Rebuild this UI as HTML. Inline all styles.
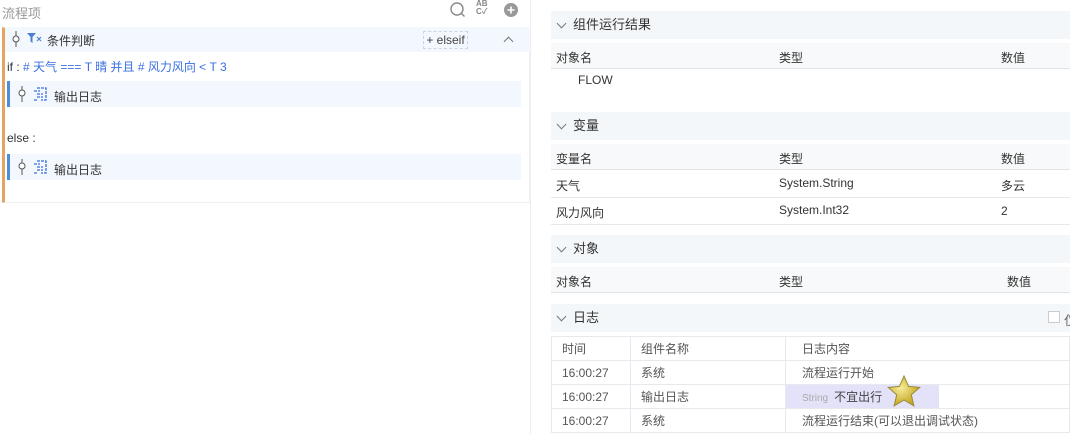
<!DOCTYPE html>
<html><head><meta charset="utf-8"><style>
*{margin:0;padding:0;box-sizing:border-box}
body{width:1070px;height:434px;background:#fff;position:relative;overflow:hidden;font-family:"Liberation Sans","Noto Sans CJK SC",sans-serif;font-size:12px;color:#333}
.a{position:absolute;white-space:nowrap}
.sec{position:absolute;left:551px;width:519px;height:28px;background:#f4f7fa;font-size:13px;line-height:28px;padding-left:22px;color:#333}
.sec:before{content:"";position:absolute;left:7px;top:9px;width:6px;height:6px;border-right:1px solid #777;border-bottom:1px solid #777;transform:rotate(45deg)}
.th{position:absolute;left:551px;width:519px;height:26px;background:#f8f9fa;border-bottom:1px solid #e0e3e6}
.row{position:absolute;left:551px;width:519px;height:27px;border-bottom:1px solid #e6e8ea}
.c{position:absolute;top:6px;white-space:nowrap}
.sub{position:absolute;left:7px;width:514px;height:26px;background:#f3f8fe;border-left:3px solid #4a90d9}
.lt{position:absolute;left:551px;top:336px;width:519px;border-collapse:collapse;font-size:12px}
.lt td{border:1px solid #e6e9ee;height:24px;padding-left:10px;color:#555}
.lt td.k{padding-left:16px}
</style></head><body>
<div class="a" style="left:2px;top:3px;font-size:13px;color:#999">流程项</div>
<svg class="a" style="left:449px;top:1px" width="18" height="18" viewBox="0 0 18 18"><circle cx="8" cy="8" r="6" fill="none" stroke="#888" stroke-width="1.4"/><path d="M12.5 12.5l3 3" stroke="#888" stroke-width="1.4"/></svg>
<div class="a" style="left:476px;top:0px;font-size:8px;line-height:8px;color:#888;font-weight:bold">AB<br>C✓</div>
<svg class="a" style="left:503px;top:2px" width="16" height="16"><circle cx="8" cy="8" r="7" fill="#999"/><path d="M8 4.5v7M4.5 8h7" stroke="#fff" stroke-width="1.6"/></svg>
<div class="a" style="left:2px;top:27px;width:528px;height:176px;border:1px solid #eef0f3;border-left:3px solid #e6a464"></div>
<div class="a" style="left:5px;top:27px;width:525px;height:25px;background:#f3f8fe"></div>
<svg class="a" style="left:11px;top:31px" width="10" height="16"><line x1="5" y1="0" x2="5" y2="16" stroke="#555"/><circle cx="5" cy="8" r="3" fill="#fff" stroke="#555"/></svg>
<svg class="a" style="left:26px;top:32px" width="16" height="13"><path d="M1 1h9l-3.5 4v6l-2-1.5v-4.5z" fill="#4a7fd6"/><path d="M11 5l4 4M15 5l-4 4" stroke="#4a7fd6" stroke-width="1.2"/></svg>
<div class="a" style="left:47px;top:32px;font-size:12px;color:#333">条件判断</div>
<div class="a" style="left:423px;top:31px;width:45px;height:18px;border:1px dashed #cdd5e0;font-size:12px;line-height:16px;text-align:center;color:#444">+ elseif</div>
<div class="a" style="left:505px;top:38px;width:7px;height:7px;border-left:1px solid #777;border-top:1px solid #777;transform:rotate(45deg)"></div>
<div class="a" style="left:7px;top:58px;font-size:12px;color:#333">if : <span style="color:#3a6fe0"># 天气 === T 晴 并且 # 风力风向 &lt; T 3</span></div>
<div class="sub" style="top:81px"></div>
<div class="sub" style="top:154px"></div>
<svg class="a" style="left:17px;top:86px" width="10" height="16"><line x1="5" y1="0" x2="5" y2="16" stroke="#555"/><circle cx="5" cy="7" r="3" fill="#fff" stroke="#555"/></svg>
<svg class="a" style="left:17px;top:159px" width="10" height="16"><line x1="5" y1="0" x2="5" y2="16" stroke="#555"/><circle cx="5" cy="7" r="3" fill="#fff" stroke="#555"/></svg>
<svg class="a" style="left:33px;top:87px" width="15" height="15"><path d="M4 1h9v12h-5M1 4h6M4 7h6M4 10h6M1 13h4" fill="none" stroke="#3a6fe0" stroke-width="1.3" stroke-dasharray="3 1"/></svg>
<svg class="a" style="left:33px;top:160px" width="15" height="15"><path d="M4 1h9v12h-5M1 4h6M4 7h6M4 10h6M1 13h4" fill="none" stroke="#3a6fe0" stroke-width="1.3" stroke-dasharray="3 1"/></svg>
<div class="a" style="left:54px;top:88px;color:#333">输出日志</div>
<div class="a" style="left:54px;top:161px;color:#333">输出日志</div>
<div class="a" style="left:7px;top:131px;color:#333">else :</div>
<div class="a" style="left:530px;top:0;width:1px;height:434px;background:#eceef0"></div>

<div class="sec" style="top:11px">组件运行结果</div>
<div class="th" style="top:43px"><span class="c" style="left:5px">对象名</span><span class="c" style="left:228px">类型</span><span class="c" style="left:450px">数值</span></div>
<div class="a" style="left:578px;top:73px">FLOW</div>
<div class="sec" style="top:112px">变量</div>
<div class="th" style="top:144px"><span class="c" style="left:5px">变量名</span><span class="c" style="left:228px">类型</span><span class="c" style="left:450px">数值</span></div>
<div class="row" style="top:171px"><span class="c" style="left:5px">天气</span><span class="c" style="left:228px;top:5px">System.String</span><span class="c" style="left:450px">多云</span></div>
<div class="row" style="top:198px"><span class="c" style="left:5px">风力风向</span><span class="c" style="left:228px;top:5px">System.Int32</span><span class="c" style="left:450px">2</span></div>
<div class="sec" style="top:235px">对象</div>
<div class="th" style="top:267px"><span class="c" style="left:5px">对象名</span><span class="c" style="left:228px">类型</span><span class="c" style="left:456px">数值</span></div>
<div class="sec" style="top:304px">日志</div>
<div class="a" style="left:1048px;top:311px;width:12px;height:12px;border:1px solid #ccc;background:#fff"></div>
<div class="a" style="left:1064px;top:310px;font-size:13px;color:#666">仅</div>
<table class="lt">
<tr><td style="width:79px">时间</td><td style="width:155px">组件名称</td><td class="k">日志内容</td></tr>
<tr><td>16:00:27</td><td>系统</td><td class="k">流程运行开始</td></tr>
<tr><td>16:00:27</td><td>输出日志</td><td style="padding:0;position:relative"><div style="position:absolute;left:0;top:0;width:153px;height:100%;background:#e3e2f8"></div><span style="position:relative;left:16px;font-size:10px;color:#aaa">String</span><span style="position:relative;left:22px;color:#444">不宜出行</span></td></tr>
<tr><td>16:00:27</td><td>系统</td><td class="k">流程运行结束(可以退出调试状态)</td></tr>
</table>
<svg class="a" style="left:886px;top:374px" width="36" height="36" viewBox="0 0 36 36"><defs><radialGradient id="g" cx="40%" cy="40%" r="60%"><stop offset="0" stop-color="#f6ec9a"/><stop offset="1" stop-color="#c4a51e"/></radialGradient></defs><path d="M18 2l4.6 10.4 11.2 1-8.5 7.4 2.6 11-9.9-5.9-9.9 5.9 2.6-11-8.5-7.4 11.2-1z" fill="url(#g)" stroke="#9a8a3a" stroke-width="1"/></svg>
</body></html>
